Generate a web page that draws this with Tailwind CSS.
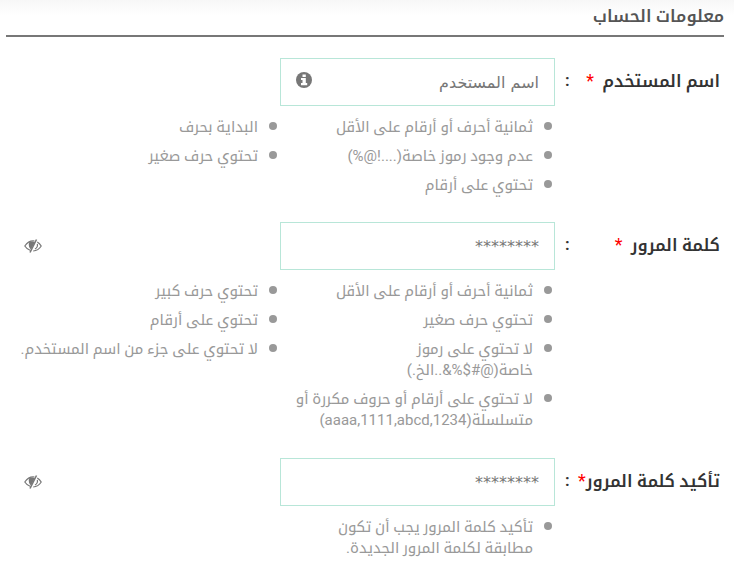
<!DOCTYPE html>
<html lang="ar" dir="rtl">
<head>
    <meta charset="UTF-8">
    <meta name="viewport" content="width=device-width, initial-scale=1.0">
    <title>معلومات الحساب</title>
    <script src="https://cdn.jsdelivr.net/npm/@tailwindcss/browser@4"></script>
</head>
<body class="bg-white font-[Roboto,'Noto_Kufi_Arabic','Noto_Sans_Arabic','DejaVu_Sans',sans-serif] text-[#999]">

    <form class="bg-linear-to-b from-[#f7f7f7] to-white to-[16px] pr-2.5 pl-1.5">
        <h1 class="h-[37px] border-b-2 border-[#777] pt-1 text-[17px] leading-6 font-semibold text-[#555]">معلومات الحساب</h1>

        <!-- Username -->
        <div class="mt-[21px] grid grid-cols-[169fr_275fr_274fr]">
            <div class="flex h-[46px] items-center justify-between pr-1 pl-2.5 text-[17px] font-semibold whitespace-nowrap text-[#333]">
                <label for="username">اسم المستخدم <span class="mr-1 text-lg font-normal text-[#f00]">*</span></label>
                <span>:</span>
            </div>
            <div class="relative">
                <input id="username" type="text" placeholder="اسم المستخدم" class="h-12 w-full border border-[#b8e6d8] px-[15px] font-['DejaVu_Sans',sans-serif] outline-none placeholder:text-[#777]">
                <svg class="absolute top-3.5 left-4 size-4" viewBox="0 0 16 16" aria-hidden="true">
                    <circle cx="8" cy="8" r="8" fill="#777"/>
                    <path d="M6.500 2.500h3.300v2.500h-3.300zM5 6h4.800v5h1.400v2.300H5V11h1.500V8H5z" fill="#fff"/>
                </svg>
            </div>
            <ul class="col-start-2 mt-[11px] space-y-2 text-[15px] leading-[21px]">
                <li class="flex gap-[11px]"><span class="mt-[5px] mr-[3px] size-2 shrink-0 rounded-full bg-[#999]"></span>ثمانية أحرف أو أرقام على الأقل</li>
                <li class="flex gap-[11px]"><span class="mt-[5px] mr-[3px] size-2 shrink-0 rounded-full bg-[#999]"></span>عدم وجود رموز خاصة(....!@%)</li>
                <li class="flex gap-[11px]"><span class="mt-[5px] mr-[3px] size-2 shrink-0 rounded-full bg-[#999]"></span>تحتوي على أرقام</li>
            </ul>
            <ul class="mt-[11px] space-y-2 text-[15px] leading-[21px]">
                <li class="flex gap-[11px]"><span class="mt-[5px] mr-[3px] size-2 shrink-0 rounded-full bg-[#999]"></span>البداية بحرف</li>
                <li class="flex gap-[11px]"><span class="mt-[5px] mr-[3px] size-2 shrink-0 rounded-full bg-[#999]"></span>تحتوي حرف صغير</li>
            </ul>
        </div>

        <!-- Password -->
        <div class="mt-[26px] grid grid-cols-[169fr_275fr_274fr]">
            <div class="flex h-[46px] items-center justify-between pr-1 pl-2.5 text-[17px] font-semibold whitespace-nowrap text-[#333]">
                <label for="password">كلمة المرور <span class="mr-1 text-lg font-normal text-[#f00]">*</span></label>
                <span>:</span>
            </div>
            <input id="password" type="password" placeholder="********" class="h-12 w-full border border-[#b8e6d8] px-[15px] font-['DejaVu_Sans',sans-serif] outline-none placeholder:text-[#777]">
            <button type="button" aria-label="إظهار كلمة المرور" class="mr-auto ml-[18px] flex h-12 items-center">
                <svg class="h-3.5 w-[18px]" viewBox="0 0 18 14" fill="none" stroke="#777" stroke-width="1.2" aria-hidden="true">
                    <path d="M10.500 2C5.500 1.300 2.500 4.500 .8 7c1.400 2.200 3.300 3.800 5.700 4.500M13.300 2.900C15 3.900 16.300 5.400 17.200 7c-1.800 3-4.500 4.800-8 5"/>
                    <path d="M12.500 .5 6 13.500" stroke-width="1.500"/>
                    <path d="M5 3.500C4.300 7 5.200 9 7 10.500l4-7.500C8.500 2 6 2.500 5 3.500z" fill="#777" stroke="none"/>
                    <path d="M13.300 5c.5 2-.4 4-2.300 5"/>
                </svg>
            </button>
            <ul class="col-start-2 mt-[11px] space-y-2 text-[15px] leading-[21px]">
                <li class="flex gap-[11px]"><span class="mt-[5px] mr-[3px] size-2 shrink-0 rounded-full bg-[#999]"></span>ثمانية أحرف أو أرقام على الأقل</li>
                <li class="flex gap-[11px]"><span class="mt-[5px] mr-[3px] size-2 shrink-0 rounded-full bg-[#999]"></span>تحتوي حرف صغير</li>
                <li class="flex gap-[11px]"><span class="mt-[5px] mr-[3px] size-2 shrink-0 rounded-full bg-[#999]"></span><span>لا تحتوي على رموز<br>خاصة(@#$%&amp;..الخ.)</span></li>
                <li class="flex gap-[11px]"><span class="mt-[5px] mr-[3px] size-2 shrink-0 rounded-full bg-[#999]"></span><span class="whitespace-nowrap">لا تحتوي على أرقام أو حروف مكررة أو<br>متسلسلة(aaaa,1111,abcd,1234)</span></li>
            </ul>
            <ul class="mt-[11px] space-y-2 text-[15px] leading-[21px]">
                <li class="flex gap-[11px]"><span class="mt-[5px] mr-[3px] size-2 shrink-0 rounded-full bg-[#999]"></span>تحتوي حرف كبير</li>
                <li class="flex gap-[11px]"><span class="mt-[5px] mr-[3px] size-2 shrink-0 rounded-full bg-[#999]"></span>تحتوي على أرقام</li>
                <li class="flex gap-[11px] whitespace-nowrap"><span class="mt-[5px] mr-[3px] size-2 shrink-0 rounded-full bg-[#999]"></span>لا تحتوي على جزء من اسم المستخدم.</li>
            </ul>
        </div>

        <!-- Confirm password -->
        <div class="mt-[27px] grid grid-cols-[169fr_275fr_274fr]">
            <div class="flex h-[46px] items-center justify-between pr-1 pl-2.5 text-[17px] font-semibold whitespace-nowrap text-[#333]">
                <label for="confirm">تأكيد كلمة المرور<span class="text-lg font-normal text-[#f00]">*</span></label>
                <span>:</span>
            </div>
            <input id="confirm" type="password" placeholder="********" class="h-12 w-full border border-[#b8e6d8] px-[15px] font-['DejaVu_Sans',sans-serif] outline-none placeholder:text-[#777]">
            <button type="button" aria-label="إظهار تأكيد كلمة المرور" class="mr-auto ml-[18px] flex h-12 items-center">
                <svg class="h-3.5 w-[18px]" viewBox="0 0 18 14" fill="none" stroke="#777" stroke-width="1.2" aria-hidden="true">
                    <path d="M10.500 2C5.500 1.300 2.500 4.500 .8 7c1.400 2.200 3.300 3.800 5.700 4.500M13.300 2.900C15 3.900 16.300 5.400 17.200 7c-1.800 3-4.500 4.800-8 5"/>
                    <path d="M12.500 .5 6 13.500" stroke-width="1.500"/>
                    <path d="M5 3.500C4.300 7 5.200 9 7 10.500l4-7.500C8.500 2 6 2.500 5 3.500z" fill="#777" stroke="none"/>
                    <path d="M13.300 5c.5 2-.4 4-2.300 5"/>
                </svg>
            </button>
            <ul class="col-start-2 mt-[11px] space-y-2 text-[15px] leading-[21px]">
                <li class="flex gap-[11px]"><span class="mt-[5px] mr-[3px] size-2 shrink-0 rounded-full bg-[#999]"></span><span>تأكيد كلمة المرور يجب أن تكون<br>مطابقة لكلمة المرور الجديدة.</span></li>
            </ul>
        </div>
    </form>

</body>
</html>
